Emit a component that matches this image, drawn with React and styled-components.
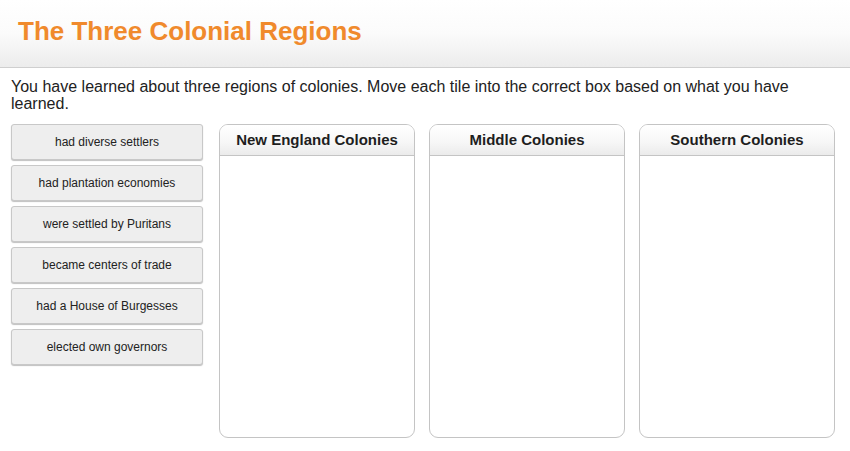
import React from "react";
import styled, { createGlobalStyle } from "styled-components";

const Global = createGlobalStyle`
  html, body { margin: 0; padding: 0; background: #fff; }
  body { font-family: "Liberation Sans", Arial, sans-serif; }
`;

const Page = styled.div`
  width: 850px;
  height: 451px;
  overflow: hidden;
  background: #fff;
`;

const Header = styled.header`
  height: 68px;
  box-sizing: border-box;
  border-bottom: 1px solid #cfcfcf;
  background: linear-gradient(to bottom, #ffffff 0%, #fbfbfb 50%, #ececec 100%);
  display: flex;
  align-items: center;
  padding: 0 0 4px 18px;
`;

const Title = styled.h1`
  margin: 0;
  font-size: 26px;
  font-weight: bold;
  color: #f08a2c;
`;

const Intro = styled.p`
  margin: 0;
  padding: 10px 11px 0 11px;
  font-size: 16px;
  line-height: 17px;
  color: #222;
`;

const Body = styled.div`
  display: flex;
  padding: 12px 0 0 11px;
`;

const TileList = styled.div`
  width: 192px;
  display: flex;
  flex-direction: column;
  gap: 5px;
  margin-right: 16px;
`;

const Tile = styled.div`
  height: 36px;
  box-sizing: border-box;
  background: #eeeeee;
  border: 1px solid #c8c8c8;
  border-radius: 3px;
  box-shadow: 0 1px 1px rgba(0, 0, 0, 0.25);
  display: flex;
  align-items: center;
  justify-content: center;
  font-size: 12px;
  color: #222;
`;

const Boxes = styled.div`
  display: flex;
  gap: 14px;
`;

const Box = styled.div`
  width: 196px;
  height: 314px;
  box-sizing: border-box;
  border: 1px solid #c4c4c4;
  border-radius: 9px;
  overflow: hidden;
  display: flex;
  flex-direction: column;
`;

const BoxHead = styled.div`
  height: 31px;
  box-sizing: border-box;
  border-bottom: 1px solid #c4c4c4;
  background: linear-gradient(to bottom, #ffffff 0%, #f6f6f6 60%, #ebebeb 100%);
  display: flex;
  align-items: center;
  justify-content: center;
  padding-bottom: 2px;
  font-size: 15px;
  font-weight: bold;
  color: #1e1e1e;
`;

const tiles = [
  "had diverse settlers",
  "had plantation economies",
  "were settled by Puritans",
  "became centers of trade",
  "had a House of Burgesses",
  "elected own governors",
];

const regions = ["New England Colonies", "Middle Colonies", "Southern Colonies"];

export default function App() {
  return (
    <Page>
      <Global />
      <Header>
        <Title>The Three Colonial Regions</Title>
      </Header>
      <Intro>
        You have learned about three regions of colonies. Move each tile into the correct box based on what you have learned.
      </Intro>
      <Body>
        <TileList>
          {tiles.map((t) => (
            <Tile key={t}>{t}</Tile>
          ))}
        </TileList>
        <Boxes>
          {regions.map((r) => (
            <Box key={r}>
              <BoxHead>{r}</BoxHead>
            </Box>
          ))}
        </Boxes>
      </Body>
    </Page>
  );
}
